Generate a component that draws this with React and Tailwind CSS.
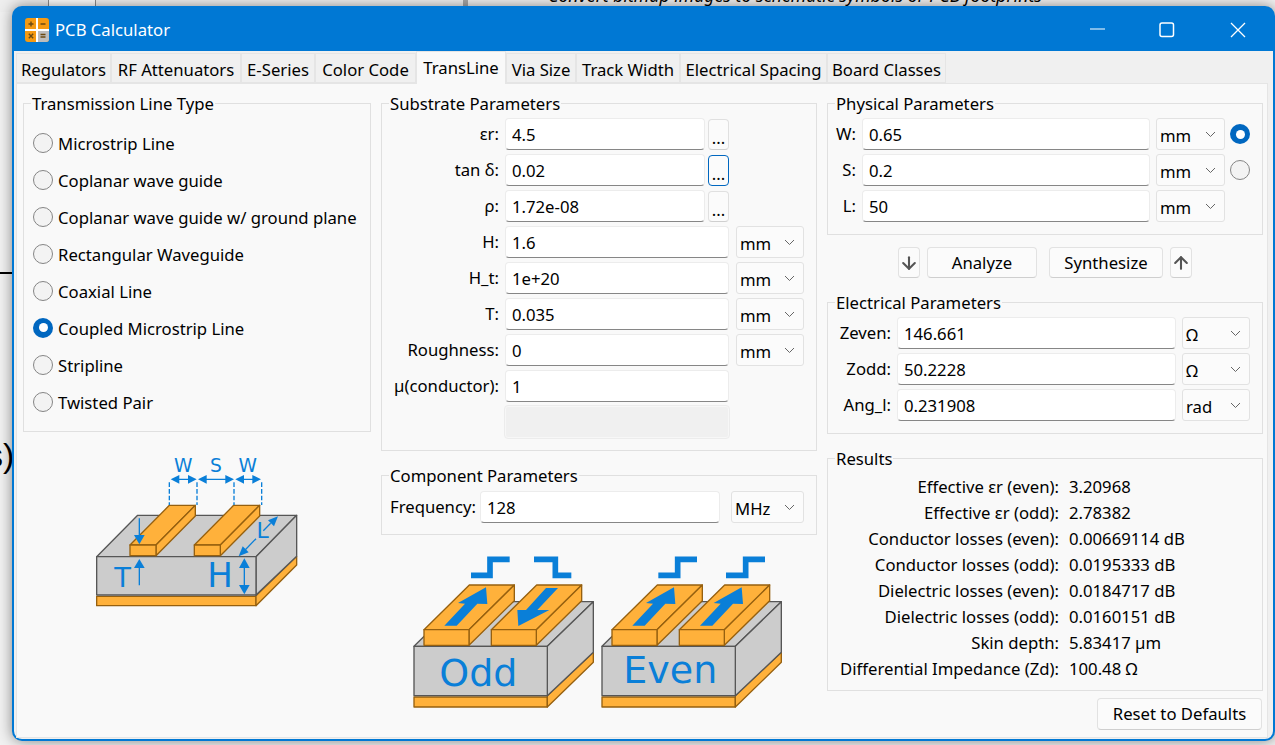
import { ArrowDown, ArrowUp } from "lucide-react";

const BLUE = "#0a7fd8";
const COPPER = "#ffb13b";
const COPPER_EDGE = "#96600f";
const GREY = "#cccccc";
const GREY_EDGE = "#565656";

const tabs = [
  ["Regulators", "w-[95px]"],
  ["RF Attenuators", "w-[130px]"],
  ["E-Series", "w-[74px]"],
  ["Color Code", "w-[101px]"],
  ["TransLine", "w-[90px]"],
  ["Via Size", "w-[70px]"],
  ["Track Width", "w-[104px]"],
  ["Electrical Spacing", "w-[147px]"],
  ["Board Classes", "w-[119px]"],
];

const lineTypes = [
  "Microstrip Line",
  "Coplanar wave guide",
  "Coplanar wave guide w/ ground plane",
  "Rectangular Waveguide",
  "Coaxial Line",
  "Coupled Microstrip Line",
  "Stripline",
  "Twisted Pair",
];

const results = [
  ["Effective εr (even):", "3.20968"],
  ["Effective εr (odd):", "2.78382"],
  ["Conductor losses (even):", "0.00669114 dB"],
  ["Conductor losses (odd):", "0.0195333 dB"],
  ["Dielectric losses (even):", "0.0184717 dB"],
  ["Dielectric losses (odd):", "0.0160151 dB"],
  ["Skin depth:", "5.83417 µm"],
  ["Differential Impedance (Zd):", "100.48 Ω"],
];

function Group({ title, className = "", children }) {
  return (
    <fieldset className={`border border-[#e0e0e0] ${className}`}>
      <legend className="ml-[7px] px-[1px] h-[24px] leading-[26px]">{title}</legend>
      {children}
    </fieldset>
  );
}

function Radio({ checked }) {
  if (checked) {
    return (
      <span className="w-[20px] h-[20px] rounded-full bg-[#0067c0] flex items-center justify-center shrink-0">
        <span className="w-[9px] h-[9px] rounded-full bg-white" />
      </span>
    );
  }
  return <span className="block w-[20px] h-[20px] rounded-full border-[1.5px] border-[#858585] bg-[#f3f3f3] shrink-0" />;
}

function Field({ value, width }) {
  return (
    <input
      readOnly
      value={value}
      className={`${width} h-[32px] px-[6px] bg-white rounded-[4px] border border-[#ececec] border-b-[#868686] outline-none shrink-0`}
    />
  );
}

function Unit({ value, width }) {
  return (
    <div className={`${width} h-[32px] pl-[3px] pr-[8px] bg-[#fbfbfb] rounded-[3px] border border-[#e2e2e2] flex items-center justify-between shrink-0`}>
      <span className="mt-[3px]">{value}</span>
      <svg width="11" height="7" viewBox="0 0 11 7" fill="none" stroke="#666" strokeWidth="1">
        <path d="M1 1l4.5 4.5L10 1" />
      </svg>
    </div>
  );
}

function Dots({ focused }) {
  return (
    <button className={`w-[21px] h-[31px] ml-[3px] rounded-[4px] bg-[#fbfbfb] border leading-[36px] shrink-0 ${focused ? "border-[#0067c0]" : "border-[#e0e0e0] border-b-[#cfcfcf]"}`}>
      ...
    </button>
  );
}

function Row({ label, labelWidth, children }) {
  return (
    <div className="flex items-center h-[32px]">
      <span className={`${labelWidth} mr-[6px] text-right whitespace-nowrap shrink-0`}>{label}</span>
      {children}
    </div>
  );
}

function PushButton({ className = "", children }) {
  return (
    <button className={`h-[31px] rounded-[4px] bg-[#fbfbfb] border border-[#e2e2e2] border-b-[#cfcfcf] flex items-center justify-center ${className}`}>
      {children}
    </button>
  );
}

function CalcIcon() {
  return (
    <svg width="24" height="24" viewBox="0 0 24 24">
      <rect width="24" height="24" rx="3" fill="#f59a12" />
      <path d="M12 12h12v9a3 3 0 0 1-3 3h-9z" fill="#bdbdbd" />
      <path d="M11 0h2v24h-2zM0 11h24v2H0z" fill="#fff" />
      <path d="M3.5 6h5M6 3.5v5M15.5 6h5M3.8 15.8l4.4 4.4M8.2 15.8l-4.4 4.4M15.5 16.5h5M15.5 19h5" stroke="#6b4a12" strokeWidth="1.4" fill="none" />
    </svg>
  );
}

function Trace({ x, y, w, dx, dy, h }) {
  return (
    <g fill={COPPER} stroke={COPPER_EDGE} strokeWidth="4" strokeLinejoin="round">
      <polygon points={`${x},${y} ${x + dx},${y - dy} ${x + dx + w},${y - dy} ${x + w},${y}`} />
      <polygon points={`${x + w},${y} ${x + w + dx},${y - dy} ${x + w + dx},${y - dy + h} ${x + w},${y + h}`} />
      <rect x={x} y={y} width={w} height={h} />
    </g>
  );
}

function MicrostripFigure() {
  return (
    <svg width="270" height="180" viewBox="0 0 810 540" className="ml-[37px] mt-[7px] shrink-0">
      <g strokeLinejoin="round">
        <polygon points="110,472 588,472 588,500 110,500" fill={COPPER} stroke={COPPER_EDGE} strokeWidth="4" />
        <polygon points="588,500 710,378 710,352 588,470" fill={COPPER} stroke={COPPER_EDGE} strokeWidth="4" />
        <polygon points="110,353 233,229 710,229 588,353" fill={GREY} stroke={GREY_EDGE} strokeWidth="4" />
        <polygon points="588,353 710,229 710,352 588,468" fill={GREY} stroke={GREY_EDGE} strokeWidth="4" />
        <rect x="110" y="353" width="478" height="115" fill={GREY} stroke={GREY_EDGE} strokeWidth="4" />
      </g>
      <Trace x={210} y={318} w={78} dx={118} dy={119} h={32} />
      <Trace x={403} y={318} w={78} dx={118} dy={119} h={32} />
      <g fill={BLUE} stroke="none">
        <polygon points="332,121 358,108 358,134" />
        <polygon points="410,121 384,108 384,134" />
        <polygon points="414,121 440,108 440,134" />
        <polygon points="522,121 496,108 496,134" />
        <polygon points="526,121 552,108 552,134" />
        <polygon points="603,121 577,108 577,134" />
        <polygon points="238,316 222,288 254,288" />
        <polygon points="238,360 222,387 254,387" />
        <polygon points="553,358 537,387 569,387" />
        <polygon points="553,466 537,438 569,438" />
        <polygon points="536,352 548,322 566,340" />
        <polygon points="654,232 624,244 642,262" />
      </g>
      <g stroke={BLUE} strokeWidth="4" fill="none">
        <path d="M350 121h40M434 121h70M546 121h40M238 238v55M238 385v54M553 385v55M556 332l32-33M610 275l22-22" />
        <path d="M328 130v68M411 130v68M522 130v68M605 130v68" strokeDasharray="14 6" />
      </g>
      <g fill={BLUE} fontFamily="DejaVu Sans" textAnchor="middle">
        <text x="370" y="100" fontSize="56">W</text>
        <text x="468" y="100" fontSize="56">S</text>
        <text x="563" y="100" fontSize="56">W</text>
        <text x="188" y="445" fontSize="82">T</text>
        <text x="480" y="445" fontSize="102">H</text>
        <text x="608" y="297" fontSize="66">L</text>
      </g>
    </svg>
  );
}

function Step({ d }) {
  return <path d={d} fill="none" stroke={BLUE} strokeWidth="17" />;
}

function ModeBox({ x, label, labelX, labelY, children }) {
  return (
    <g transform={`translate(${x} 0)`}>
      <g strokeLinejoin="round" strokeWidth="4">
        <rect x="42" y="456" width="400" height="30" fill={COPPER} stroke={COPPER_EDGE} />
        <polygon points="442,486 580,352 580,322 442,452" fill={COPPER} stroke={COPPER_EDGE} />
        <polygon points="42,304 178,170 580,170 442,304" fill={GREY} stroke={GREY_EDGE} />
        <polygon points="442,304 580,170 580,322 442,452" fill={GREY} stroke={GREY_EDGE} />
        <rect x="42" y="304" width="400" height="148" fill={GREY} stroke={GREY_EDGE} />
      </g>
      <Trace x={72} y={254} w={135} dx={136} dy={134} h={47} />
      <Trace x={274} y={254} w={135} dx={136} dy={134} h={47} />
      <text x={labelX} y={labelY} fontSize="114" fill={BLUE} fontFamily="DejaVu Sans" textAnchor="middle">
        {label}
      </text>
      {children}
    </g>
  );
}

function UpArrow({ dx = 0 }) {
  return (
    <polygon
      transform={`translate(${dx} 0)`}
      fill={BLUE}
      points="133,242 195,176 174,174 258,127 262,177 232,176 170,242"
    />
  );
}

function ModesFigure() {
  return (
    <svg width="400" height="180" viewBox="0 0 1200 540" className="ml-[19px] mt-[10px] shrink-0">
      <ModeBox x={0} label="Odd" labelX={235} labelY={422}>
        <UpArrow />
        <polygon fill={BLUE} points="438,129 474,129 412,195 448,195 355,243 352,195 378,195" />
        <Step d="M213 91h57V43h59" />
        <Step d="M402 43h64v48h48" />
      </ModeBox>
      <ModeBox x={564} label="Even" labelX={247} labelY={415}>
        <UpArrow />
        <UpArrow dx={203} />
        <Step d="M211 91h58V43h58" />
        <Step d="M414 91h59V43h58" />
      </ModeBox>
    </svg>
  );
}

export default function App() {
  return (
    <div className="relative w-[1275px] h-[745px] overflow-hidden bg-[#f1f1f1] font-['Noto_Sans',sans-serif] text-[16.7px] text-black">
      {/* whatever sits behind the calculator window */}
      <div className="absolute left-0 top-0 w-[48px] h-[12px] bg-[#eeeeee]" />
      <div className="absolute left-[48px] top-0 w-[48px] h-[12px] bg-white border-x border-x-[#8c8c8c]" />
      <div className="absolute left-[463px] top-0 w-[5px] h-[12px] bg-[#a8a8a8]" />
      <div className="absolute left-0 top-[272px] w-[14px] h-[2px] bg-black" />
      <div className="absolute left-[-14px] top-[430px] text-[34px] font-['Liberation_Sans',sans-serif]">s)</div>
      <div className="absolute left-[548px] top-[-18px] text-[17.7px] italic whitespace-nowrap">
        Convert bitmap images to schematic symbols or PCB footprints
      </div>

      <div className="relative mt-[6px] ml-[12px] w-[1263px] h-[735px] flex flex-col rounded-[10px] bg-[#0078d4] shadow-[0_0_14px_rgba(0,0,0,0.45)] overflow-hidden">
        {/* title bar */}
        <div className="h-[45px] flex items-center shrink-0 text-white">
          <div className="ml-[13px] mt-[3px]">
            <CalcIcon />
          </div>
          <span className="ml-[6px] mt-[3px]">PCB Calculator</span>
          <div className="ml-auto flex items-center">
            <svg width="16" height="16" viewBox="0 0 16 16" className="mr-[53px] mt-[2px]" fill="none" stroke="#fff" strokeWidth="1.2">
              <path d="M0 7h15" />
            </svg>
            <svg width="16" height="16" viewBox="0 0 16 16" className="mr-[55px] mt-[3px]" fill="none" stroke="#fff" strokeWidth="1.5">
              <rect x="1" y="1" width="13.5" height="13.5" rx="2" />
            </svg>
            <svg width="16" height="16" viewBox="0 0 16 16" className="mr-[29px] mt-[3px]" fill="none" stroke="#fff" strokeWidth="1.3">
              <path d="M1 1l14 14M15 1L1 15" />
            </svg>
          </div>
        </div>

        {/* dialog body */}
        <div className="flex-1 flex flex-col mx-[2px] mb-[2px] rounded-b-[8px] bg-[#f0f0f0] pl-[2px] pr-[5px] pt-[2px] pb-[1px]">
          <div className="flex h-[30px] shrink-0 relative z-10">
            {tabs.map(([name, width]) =>
              name === "TransLine" ? (
                <div key={name} className={`${width} h-[33px] -mt-[2px] bg-[#f9f9f9] border border-[#e5e5e5] border-b-0 flex items-center justify-center pb-[1px]`}>
                  {name}
                </div>
              ) : (
                <div key={name} className={`${width} h-[30px] border border-[#e5e5e5] flex items-center justify-center pt-[3px]`}>
                  {name}
                </div>
              )
            )}
          </div>

          <div className="flex-1 flex gap-[10px] bg-[#f9f9f9] border border-[#e5e5e5] pl-[6px] pt-[7px]">
            {/* left column */}
            <div className="w-[348px] flex flex-col shrink-0">
              <Group title="Transmission Line Type" className="pt-[9px] pb-[11px]">
                {lineTypes.map((name) => (
                  <div key={name} className="h-[37px] ml-[9px] flex items-center gap-[5px]">
                    <Radio checked={name === "Coupled Microstrip Line"} />
                    <span className="whitespace-nowrap mt-[2px]">{name}</span>
                  </div>
                ))}
              </Group>
              <MicrostripFigure />
            </div>

            {/* center column */}
            <div className="w-[436px] flex flex-col shrink-0">
              <Group title="Substrate Parameters" className="pt-[3px] pb-[12px]">
                <div className="flex flex-col gap-[4px]">
                  <Row label="εr:" labelWidth="w-[117px]">
                    <Field value="4.5" width="w-[200px]" />
                    <Dots />
                  </Row>
                  <Row label="tan δ:" labelWidth="w-[117px]">
                    <Field value="0.02" width="w-[200px]" />
                    <Dots focused />
                  </Row>
                  <Row label="ρ:" labelWidth="w-[117px]">
                    <Field value="1.72e-08" width="w-[200px]" />
                    <Dots />
                  </Row>
                  {[
                    ["H:", "1.6"],
                    ["H_t:", "1e+20"],
                    ["T:", "0.035"],
                    ["Roughness:", "0"],
                  ].map(([label, value]) => (
                    <Row key={label} label={label} labelWidth="w-[117px]">
                      <Field value={value} width="w-[224px]" />
                      <div className="w-[7px]" />
                      <Unit value="mm" width="w-[68px]" />
                    </Row>
                  ))}
                  <Row label="µ(conductor):" labelWidth="w-[117px]">
                    <Field value="1" width="w-[224px]" />
                  </Row>
                  <div className="ml-[123px] w-[224px] h-[32px] bg-[#f0f0f0] border border-[#f7f7f7] rounded-[3px] outline outline-[#ececec]" />
                </div>
              </Group>

              <Group title="Component Parameters" className="mt-[12px] pt-[4px] pb-[11px]">
                <div className="flex items-center h-[32px]">
                  <span className="ml-[8px] w-[85px] mr-[5px] shrink-0">Frequency:</span>
                  <Field value="128" width="w-[240px]" />
                  <div className="w-[11px]" />
                  <Unit value="MHz" width="w-[73px]" />
                </div>
              </Group>

              <ModesFigure />
            </div>

            {/* right column */}
            <div className="w-[436px] flex flex-col shrink-0">
              <Group title="Physical Parameters" className="pt-[3px] pb-[12px]">
                <div className="flex flex-col gap-[4px]">
                  {[
                    ["W:", "0.65", true],
                    ["S:", "0.2", false],
                    ["L:", "50", null],
                  ].map(([label, value, radio]) => (
                    <Row key={label} label={label} labelWidth="w-[28px]">
                      <Field value={value} width="w-[288px]" />
                      <div className="w-[6px]" />
                      <Unit value="mm" width="w-[69px]" />
                      {radio !== null && (
                        <div className="ml-[5px]">
                          <Radio checked={radio} />
                        </div>
                      )}
                    </Row>
                  ))}
                </div>
              </Group>

              <div className="mt-[12px] flex justify-center">
                <PushButton className="w-[22px]">
                  <ArrowDown size={20} strokeWidth={2.5} color="#555" />
                </PushButton>
                <PushButton className="w-[110px] ml-[7px]">Analyze</PushButton>
                <PushButton className="w-[114px] ml-[12px]">Synthesize</PushButton>
                <PushButton className="w-[22px] ml-[7px]">
                  <ArrowUp size={20} strokeWidth={2.5} color="#555" />
                </PushButton>
              </div>

              <Group title="Electrical Parameters" className="mt-[12px] pt-[3px] pb-[12px]">
                <div className="flex flex-col gap-[4px]">
                  {[
                    ["Zeven:", "146.661", "Ω"],
                    ["Zodd:", "50.2228", "Ω"],
                    ["Ang_l:", "0.231908", "rad"],
                  ].map(([label, value, unit]) => (
                    <Row key={label} label={label} labelWidth="w-[63px]">
                      <Field value={value} width="w-[279px]" />
                      <div className="w-[6px]" />
                      <Unit value={unit} width="w-[68px]" />
                    </Row>
                  ))}
                </div>
              </Group>

              <Group title="Results" className="mt-[12px] pt-[4px] pb-[8px]">
                {results.map(([label, value]) => (
                  <div key={label} className="flex items-center h-[26px]">
                    <span className="w-[231px] mr-[10px] text-right whitespace-nowrap shrink-0">{label}</span>
                    <span className="whitespace-nowrap">{value}</span>
                  </div>
                ))}
              </Group>

              <PushButton className="mt-[7px] w-[165px] h-[32px] self-end mr-[1px]">Reset to Defaults</PushButton>
            </div>
          </div>
        </div>
      </div>
    </div>
  );
}
